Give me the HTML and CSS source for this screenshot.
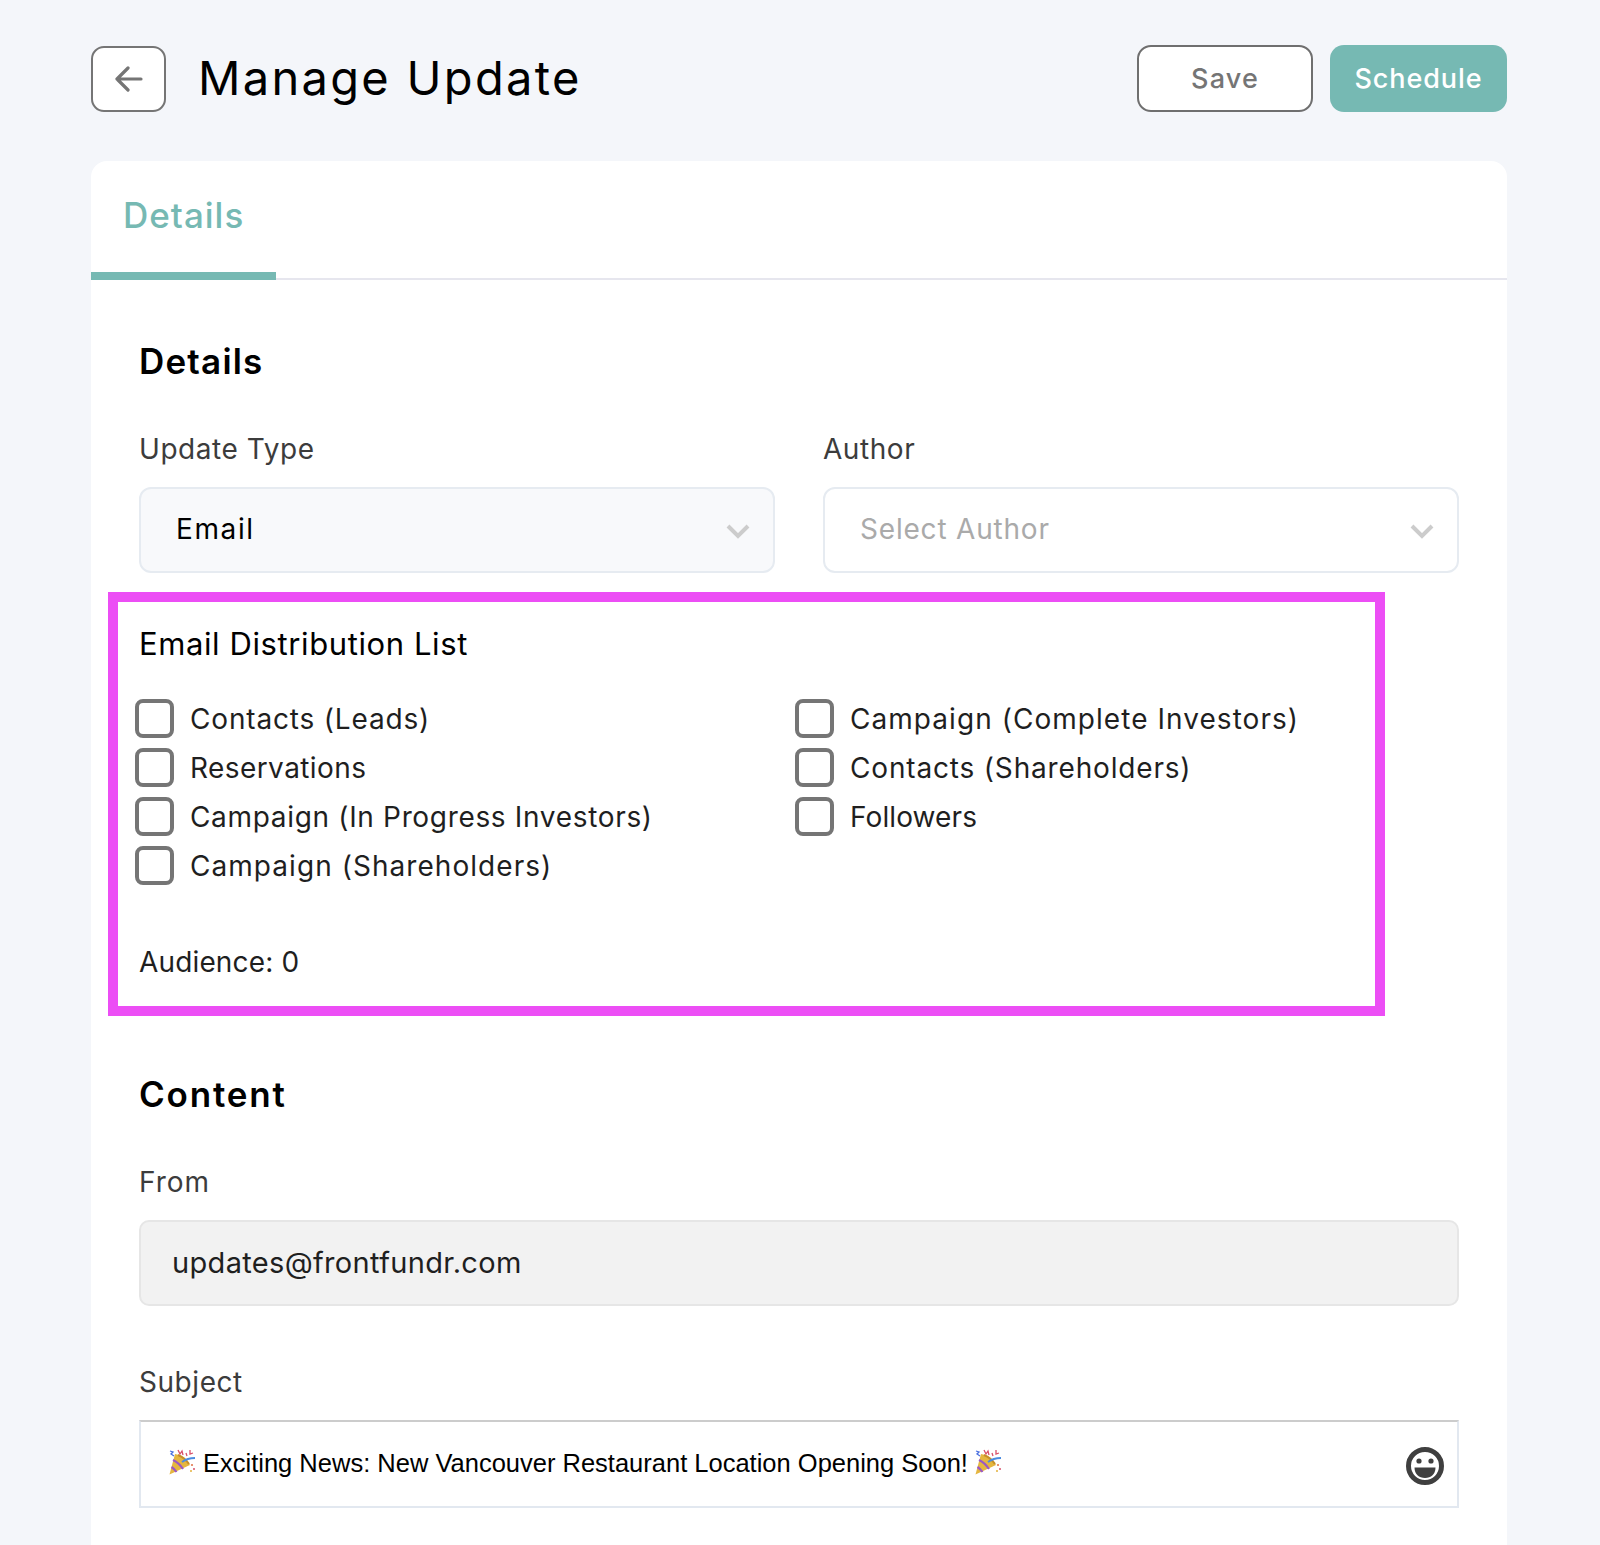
FILE: index.html
```html
<!DOCTYPE html>
<html lang="en">
<head>
<meta charset="utf-8">
<title>Manage Update</title>
<link rel="stylesheet" href="styles.css">
</head>
<body>
<div class="page">
  <header class="topbar">
    <button class="back" aria-label="Back">
      <svg width="28" height="26" viewBox="0 0 28 26" fill="none" stroke="#757575" stroke-width="3.2" stroke-linecap="round" stroke-linejoin="round"><path d="M26 13H2M13 2 2 13l11 11"/></svg>
    </button>
    <h1 class="title">Manage Update</h1>
    <div class="actions">
      <button class="btn btn-save">Save</button>
      <button class="btn btn-schedule">Schedule</button>
    </div>
  </header>
  <main class="card">
    <nav class="tabs"><div class="tab">Details</div></nav>
    <div class="body">
      <h2 class="section-title">Details</h2>
      <div class="two-col">
        <div class="field">
          <label class="label">Update Type</label>
          <div class="select select-filled"><span class="select-value">Email</span>
            <svg class="chev" width="24" height="15" viewBox="0 0 24 15" fill="none" stroke="#cccccc" stroke-width="4"><path d="M2 2l10 10L22 2"/></svg>
          </div>
        </div>
        <div class="field">
          <label class="label">Author</label>
          <div class="select"><span class="select-value placeholder">Select Author</span>
            <svg class="chev" width="24" height="15" viewBox="0 0 24 15" fill="none" stroke="#cccccc" stroke-width="4"><path d="M2 2l10 10L22 2"/></svg>
          </div>
        </div>
      </div>
      <section class="dist">
        <div class="highlight"></div>
        <h3 class="dist-title">Email Distribution List</h3>
        <div class="checks">
          <div class="check-col">
            <div class="check"><span class="box"></span><span>Contacts (Leads)</span></div>
            <div class="check check-tight"><span class="box"></span><span>Reservations</span></div>
            <div class="check check-mid"><span class="box"></span><span>Campaign (In Progress Investors)</span></div>
            <div class="check check-wide"><span class="box"></span><span>Campaign (Shareholders)</span></div>
          </div>
          <div class="check-col">
            <div class="check check-wide"><span class="box"></span><span>Campaign (Complete Investors)</span></div>
            <div class="check"><span class="box"></span><span>Contacts (Shareholders)</span></div>
            <div class="check check-none"><span class="box"></span><span>Followers</span></div>
          </div>
        </div>
        <div class="audience">Audience: 0</div>
      </section>
      <h2 class="section-title content-title">Content</h2>
      <label class="label from-label">From</label>
      <div class="input-disabled">updates@frontfundr.com</div>
      <label class="label subject-label">Subject</label>
      <div class="subject">
        <svg class="popper" width="27" height="26" viewBox="0 0 27 26"><use href="#popper"/></svg>
        <span class="subject-text">Exciting News: New Vancouver Restaurant Location Opening Soon!</span>
        <svg class="popper" width="27" height="26" viewBox="0 0 27 26"><use href="#popper"/></svg>
        <svg class="smile" width="38" height="38" viewBox="0 0 38 38">
          <circle cx="19" cy="19" r="16.5" fill="#fff" stroke="#3f3f3f" stroke-width="5"/>
          <circle cx="13" cy="14" r="2.6" fill="#3f3f3f"/>
          <circle cx="25" cy="14" r="2.6" fill="#3f3f3f"/>
          <path d="M8.5 20.5h21c0 6.5-4.500 10.500-10.500 10.500S8.500 27 8.500 20.500z" fill="#3f3f3f"/>
        </svg>
      </div>
    </div>
  </main>
</div>
<svg class="defs" width="0" height="0">
  <defs>
    <g id="popper">
      <path d="M0.500 25.500 6 5q9 1 15 11z" fill="#e5b63f"/>
      <path d="M4 11q6 3 10 9M2.500 18q3 2 5 5" stroke="#9a58c4" stroke-width="2.200" fill="none"/>
      <path d="M9 6q7 3 11 9" stroke="#c68f28" stroke-width="2" fill="none"/>
      <path d="M13 13c4-3 8-4 13-4" stroke="#4a8be0" stroke-width="1.800" fill="none"/>
      <path d="M1 2l3 1-2 2 3 2" stroke="#4a6fe0" stroke-width="1.300" fill="none"/>
      <path d="M9 1l2 4 2-3 1 4" stroke="#d8506a" stroke-width="1.300" fill="none"/>
      <path d="M17 4l1 3M21 1v4l3-1" stroke="#d8506a" stroke-width="1.300" fill="none"/>
      <circle cx="23" cy="16" r="1.100" fill="#e07a50"/><circle cx="25" cy="20" r="1" fill="#d8506a"/><circle cx="22" cy="22" r="1" fill="#e3b23c"/>
    </g>
  </defs>
</svg>
</body>
</html>
```

FILE: styles.css
```css
* { box-sizing: border-box; }
html, body { margin: 0; padding: 0; height: 1545px; overflow: hidden; }
body { background: #f4f6fa; font-family: Inter, "Liberation Sans", sans-serif; color: #000; }
.defs { position: absolute; }
.page { padding: 45px 93px 0 91px; }
.topbar { display: flex; align-items: center; height: 67px; }
.back { width: 75px; height: 66px; background: #fff; border: 2px solid #757575; border-radius: 13px; padding: 0; display: flex; align-items: center; justify-content: center; }
.title { margin: 0 0 0 32px; font-size: 47px; font-weight: 400; letter-spacing: 2.3px; line-height: 64px; padding-bottom: 2px; }
.actions { margin-left: auto; display: flex; gap: 17px; }
.btn { height: 67px; border-radius: 14px; font-family: inherit; font-size: 27px; font-weight: 500; padding: 0 0 1px; }
.btn-save { width: 176px; background: #fff; border: 2px solid #6f6f6f; color: #757575; letter-spacing: 1.2px; }
.btn-schedule { width: 177px; background: #76b9b3; border: 0; color: #fff; letter-spacing: 0.9px; }
.card { margin-top: 49px; background: #fff; border-radius: 16px 16px 0 0; height: 1400px; }
.tabs { height: 119px; border-bottom: 2px solid #e6e6ee; }
.tab { width: 185px; height: 119px; padding: 32px 0 0 32px; border-bottom: 8px solid #76b9b3; color: #76b9b3; font-size: 35px; font-weight: 500; line-height: 44px; letter-spacing: 1px; }
.body { padding: 0 48px; }
.section-title { margin: 0; font-size: 35px; font-weight: 600; line-height: 44px; padding-top: 59px; letter-spacing: 1.2px; }
.two-col { display: grid; grid-template-columns: 636px 636px; column-gap: 48px; margin-top: 46px; }
.label { display: block; font-size: 28px; font-weight: 400; line-height: 40px; color: #3c3c3c; letter-spacing: 0.55px; }
.select { margin-top: 18px; height: 86px; border: 2px solid #e6ebf1; border-radius: 12px; background: #fff; display: flex; align-items: center; justify-content: space-between; padding: 0 23px 0 35px; }
.select-filled { background: #f8f9fb; }
.select-value { font-size: 28px; line-height: 40px; letter-spacing: 0.8px; margin-top: -2px; }
.select-filled .select-value { letter-spacing: 1.6px; }
.placeholder { color: #aaaaaa; }
.chev { margin-top: 2px; }
.dist { position: relative; margin-top: 29px; padding-top: 20px; height: 414px; }
.highlight { position: absolute; left: -31px; top: -10px; width: 1277px; height: 424px; border: 10px solid #ec4ef5; pointer-events: none; }
.dist-title { margin: 0; font-size: 31px; font-weight: 400; line-height: 44px; letter-spacing: 0.6px; }
.checks { display: grid; grid-template-columns: 660px 1fr; margin-top: 28px; margin-left: -4px; }
.check { display: flex; align-items: center; gap: 16px; height: 49px; font-size: 28px; color: #1f1f1f; letter-spacing: 0.83px; }
.check-tight { letter-spacing: 0.42px; }
.check-mid { letter-spacing: 0.67px; }
.check-wide { letter-spacing: 1.05px; }
.check-none { letter-spacing: 0.1px; }
.box { width: 39px; height: 39px; border: 4px solid #757575; border-radius: 8px; flex: none; }
.audience { position: absolute; top: 340px; font-size: 28px; line-height: 40px; color: #1f1f1f; letter-spacing: 0.15px; }
.content-title { padding-top: 0; margin-top: 56px; letter-spacing: 1.8px; }
.from-label { margin-top: 46px; letter-spacing: 1px; }
.input-disabled { margin-top: 18px; height: 86px; background: #f2f2f2; border: 2px solid #e6e6e6; border-radius: 10px; padding-left: 31px; font-size: 29px; line-height: 81px; color: #1f1f1f; letter-spacing: 0.33px; }
.subject-label { margin-top: 56px; }
.subject { margin-top: 18px; height: 88px; border: 2px solid #e2e8f0; border-top-color: #cccccc; display: flex; align-items: center; padding: 0 13px 0 28px; gap: 7px; }
.popper { flex: none; margin-top: -4px; }
.subject-text { font-family: "Liberation Sans", Arial, sans-serif; font-size: 25.5px; letter-spacing: 0; margin-top: -2px; white-space: nowrap; }
.smile { margin-left: auto; flex: none; margin-top: 3px; }
```
